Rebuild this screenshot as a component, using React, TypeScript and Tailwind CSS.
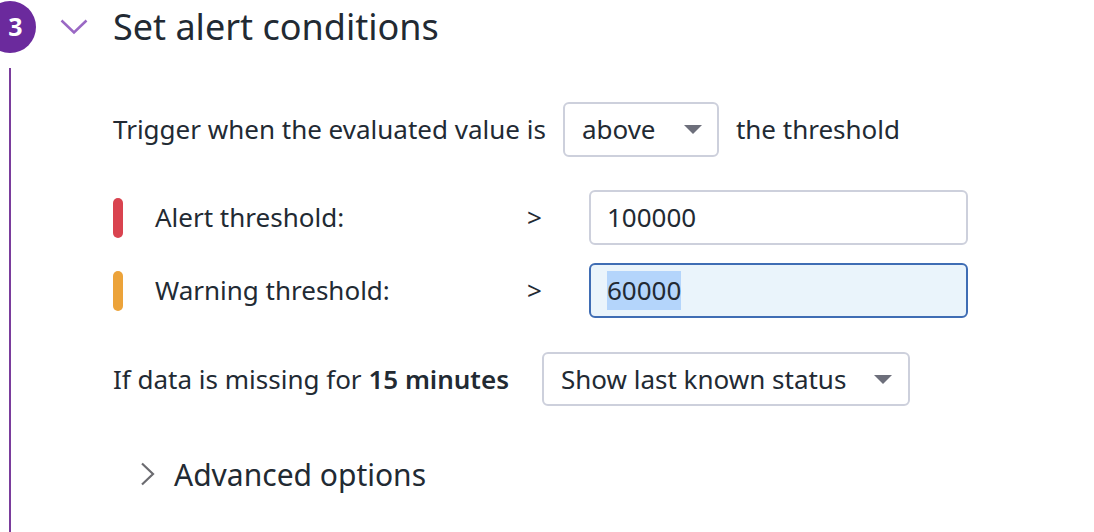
import React from "react";

const font = { fontFamily: '"Noto Sans", "Open Sans", sans-serif' };

function Caret() {
  return (
    <svg width="18" height="9" viewBox="0 0 18 9" className="shrink-0">
      <path d="M0 0 L18 0 L9 9 Z" fill="#6d6f7b" />
    </svg>
  );
}

function ThresholdRow({ color, label, value, active }: { color: string; label: string; value: string; active?: boolean }) {
  return (
    <div className="flex items-center">
      <div className={`w-[10px] h-[40px] rounded-full ${color}`} />
      <div className="ml-[32px] w-[372px] text-[26px]">{label}</div>
      <div className="w-[62px] text-[26px]">&gt;</div>
      <div
        className={
          active
            ? "w-[379px] h-[55px] rounded-md border-2 border-[#3f6db4] bg-[#eaf4fb] flex items-center px-[16px] text-[26px]"
            : "w-[379px] h-[55px] rounded-md border-2 border-[#cdd0dc] bg-white flex items-center px-[16px] text-[26px]"
        }
      >
        <span className={active ? "bg-[#b4d5fb]" : ""}>{value}</span>
      </div>
    </div>
  );
}

export default function App() {
  return (
    <div className="w-[1094px] h-[532px] bg-white overflow-hidden text-[#222a33]" style={font}>
      {/* Step header */}
      <div className="flex items-center h-[54px]">
        <div className="ml-[-16px] w-[52px] h-[52px] rounded-full bg-[#6b2a9d] flex items-center justify-center pl-[11px] text-white text-[25px] font-bold">
          3
        </div>
        <svg width="28" height="16" viewBox="0 0 28 16" className="ml-[24px]">
          <path d="M1.5 1.5 L14 13.5 L26.5 1.5" fill="none" stroke="#9a68c4" strokeWidth="2.5" />
        </svg>
        <h2 className="ml-[25px] text-[36px] font-normal leading-none">Set alert conditions</h2>
      </div>

      {/* Step body */}
      <div className="ml-[9px] mt-[14px] border-l-2 border-[#7a3d9c] pl-[102px] pt-[34px] h-[600px]">
        <div className="flex items-center text-[26px]">
          <span>Trigger when the evaluated value is</span>
          <div className="ml-[17px] w-[156px] h-[55px] rounded-md border-2 border-[#cdd0dc] flex items-center justify-between pl-[17px] pr-[15px]">
            <span>above</span>
            <Caret />
          </div>
          <span className="ml-[17px]">the threshold</span>
        </div>

        <div className="mt-[33px] flex flex-col gap-[18px]">
          <ThresholdRow color="bg-[#d9434f]" label="Alert threshold:" value="100000" />
          <ThresholdRow color="bg-[#eca33a]" label="Warning threshold:" value="60000" active />
        </div>

        <div className="mt-[34px] flex items-center text-[26px]">
          <span>
            If data is missing for <b className="font-semibold">15 minutes</b>
          </span>
          <div className="ml-[33px] w-[368px] h-[54px] rounded-md border-2 border-[#cdd0dc] flex items-center justify-between pl-[17px] pr-[16px]">
            <span>Show last known status</span>
            <Caret />
          </div>
        </div>

        <div className="mt-[48px] ml-[27px] flex items-center h-[40px]">
          <svg width="16" height="24" viewBox="0 0 16 24">
            <path d="M2 1.5 L13 12 L2 22.5" fill="none" stroke="#6b6b70" strokeWidth="2.2" />
          </svg>
          <span className="ml-[18px] text-[30px]">Advanced options</span>
        </div>
      </div>
    </div>
  );
}
